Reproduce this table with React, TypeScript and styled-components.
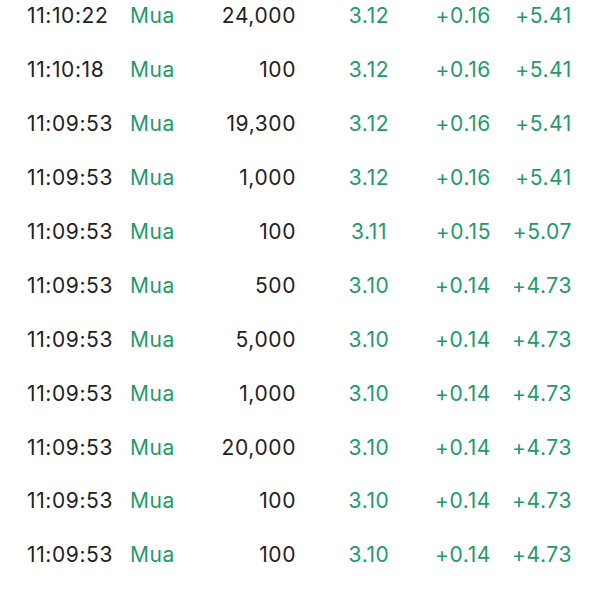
import React from "react";
import styled, { createGlobalStyle } from "styled-components";

const Global = createGlobalStyle`
  html, body { margin: 0; padding: 0; background: #fff; }
  body { font-family: Inter, "Noto Sans", sans-serif; overflow: hidden; }
`;

const List = styled.div`
  margin-top: -11px;
  padding-left: 27px;
  display: flex;
  flex-direction: column;
`;

const Row = styled.div`
  display: grid;
  grid-template-columns: 103px 80px 86px 146px 49px 81px;
  align-items: center;
  height: 53.9px;
  font-size: 21px;
  letter-spacing: 0.6px;
  color: #222;
  white-space: nowrap;
`;

const Cell = styled.span<{ $align?: "start" | "center" | "end"; $green?: boolean }>`
  justify-self: ${(p) => p.$align || "start"};
  color: ${(p) => (p.$green ? "#1f9a68" : "#222")};
`;

type Trade = { t: string; v: string; p: string; c: string; pct: string };

const trades: Trade[] = [
  { t: "11:10:22", v: "24,000", p: "3.12", c: "+0.16", pct: "+5.41" },
  { t: "11:10:18", v: "100", p: "3.12", c: "+0.16", pct: "+5.41" },
  { t: "11:09:53", v: "19,300", p: "3.12", c: "+0.16", pct: "+5.41" },
  { t: "11:09:53", v: "1,000", p: "3.12", c: "+0.16", pct: "+5.41" },
  { t: "11:09:53", v: "100", p: "3.11", c: "+0.15", pct: "+5.07" },
  { t: "11:09:53", v: "500", p: "3.10", c: "+0.14", pct: "+4.73" },
  { t: "11:09:53", v: "5,000", p: "3.10", c: "+0.14", pct: "+4.73" },
  { t: "11:09:53", v: "1,000", p: "3.10", c: "+0.14", pct: "+4.73" },
  { t: "11:09:53", v: "20,000", p: "3.10", c: "+0.14", pct: "+4.73" },
  { t: "11:09:53", v: "100", p: "3.10", c: "+0.14", pct: "+4.73" },
  { t: "11:09:53", v: "100", p: "3.10", c: "+0.14", pct: "+4.73" },
];

export default function App() {
  return (
    <>
      <Global />
      <List>
        {trades.map((r, i) => (
          <Row key={i}>
            <Cell>{r.t}</Cell>
            <Cell $green>Mua</Cell>
            <Cell $align="end">{r.v}</Cell>
            <Cell $align="center" $green>{r.p}</Cell>
            <Cell $align="end" $green>{r.c}</Cell>
            <Cell $align="end" $green>{r.pct}</Cell>
          </Row>
        ))}
      </List>
    </>
  );
}
